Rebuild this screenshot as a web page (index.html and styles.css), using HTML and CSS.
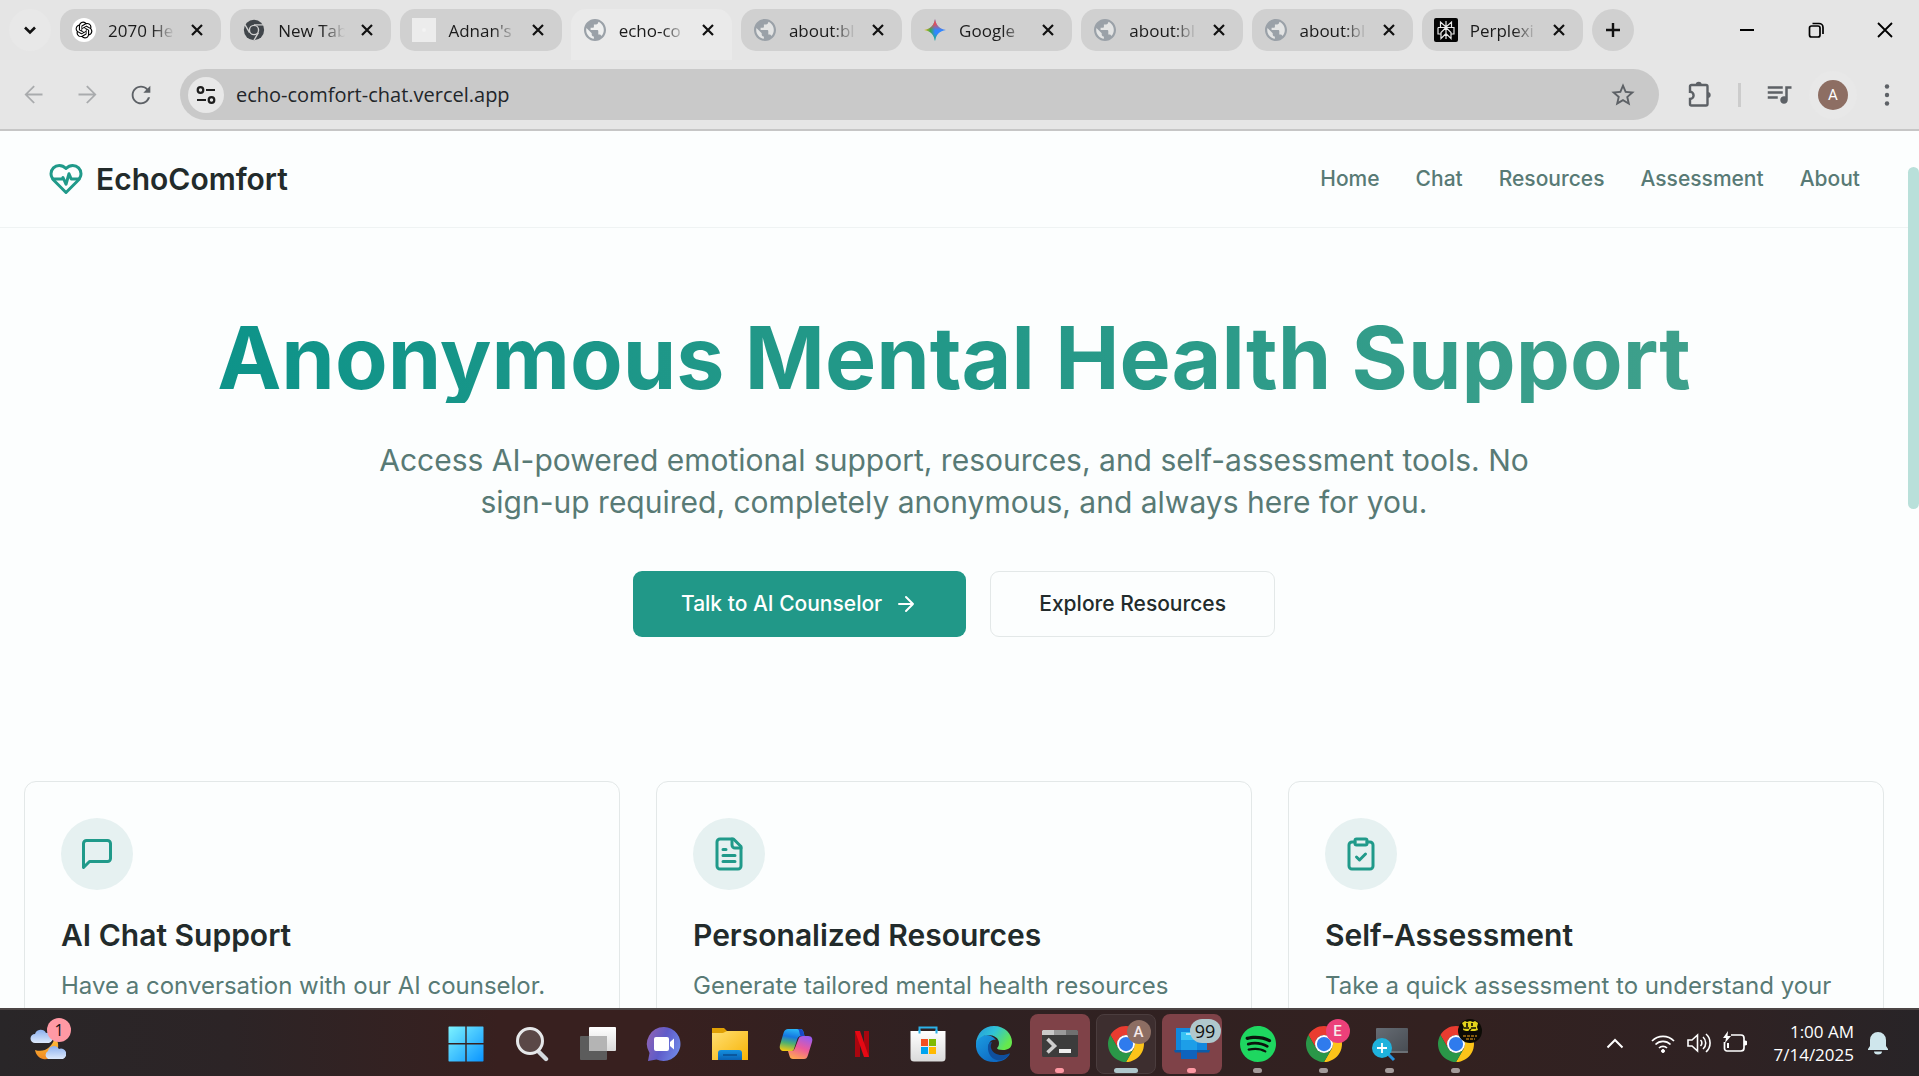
FILE: index.html
```html
<!DOCTYPE html>
<html lang="en">
<head>
<meta charset="utf-8">
<title>EchoComfort</title>
<link rel="stylesheet" href="styles.css">
</head>
<body>
<svg class="defs" aria-hidden="true">
  <defs>
    <linearGradient id="g-win" x1="0" y1="0" x2="1" y2="1"><stop offset="0" stop-color="#7df3ff"/><stop offset="1" stop-color="#0a94ff"/></linearGradient>
    <linearGradient id="g-folder" x1="0" y1="0" x2="1" y2="1"><stop offset="0" stop-color="#ffdf72"/><stop offset="1" stop-color="#f7b305"/></linearGradient>
    <linearGradient id="g-blue" x1="0" y1="0" x2="0" y2="1"><stop offset="0" stop-color="#1490df"/><stop offset="1" stop-color="#0a62b4"/></linearGradient>
    <linearGradient id="g-chat" x1="0" y1="0.2" x2="1" y2="0.6"><stop offset="0" stop-color="#8f63b4"/><stop offset="0.5" stop-color="#5f5bc9"/><stop offset="1" stop-color="#6f87e6"/></linearGradient>
    <linearGradient id="g-cop1" x1="0.5" y1="0" x2="0.3" y2="1"><stop offset="0" stop-color="#29b5f5"/><stop offset="0.35" stop-color="#1577e0"/><stop offset="0.65" stop-color="#4fb070"/><stop offset="1" stop-color="#f2c912"/></linearGradient>
    <linearGradient id="g-cop2" x1="0.7" y1="0" x2="0.3" y2="1"><stop offset="0" stop-color="#9a5cf0"/><stop offset="0.5" stop-color="#ec5a9c"/><stop offset="1" stop-color="#ffa552"/></linearGradient>
    <linearGradient id="g-edge1" x1="0" y1="0" x2="1" y2="0.5"><stop offset="0" stop-color="#2396dc"/><stop offset="0.5" stop-color="#30c3d6"/><stop offset="1" stop-color="#66e84c"/></linearGradient>
    <linearGradient id="g-edge2" x1="0" y1="0" x2="1" y2="1"><stop offset="0" stop-color="#1b9de2"/><stop offset="1" stop-color="#0a59b8"/></linearGradient>
    <linearGradient id="g-moon" x1="0" y1="0" x2="0" y2="1"><stop offset="0" stop-color="#ffc33a"/><stop offset="1" stop-color="#f08a24"/></linearGradient>
    <linearGradient id="g-cloud" x1="0" y1="0" x2="0" y2="1"><stop offset="0" stop-color="#8cb0ee"/><stop offset="1" stop-color="#dde9fb"/></linearGradient>
    <linearGradient id="g-white" x1="0" y1="0" x2="0" y2="1"><stop offset="0" stop-color="#ffffff"/><stop offset="1" stop-color="#dadada"/></linearGradient>
    <linearGradient id="g-gray" x1="0" y1="0" x2="1" y2="1"><stop offset="0" stop-color="#666c74"/><stop offset="1" stop-color="#474c52"/></linearGradient>
    <linearGradient id="g-gem" x1="0" y1="0.5" x2="1" y2="0.5"><stop offset="0" stop-color="#fbbc04"/><stop offset="0.3" stop-color="#34a853"/><stop offset="0.5" stop-color="#3186ff"/><stop offset="1" stop-color="#3186ff"/></linearGradient>
    <linearGradient id="g-gem2" x1="0.5" y1="0" x2="0.5" y2="1"><stop offset="0" stop-color="#ff4641"/><stop offset="0.25" stop-color="#ff4641" stop-opacity="0.8"/><stop offset="0.5" stop-color="#ff4641" stop-opacity="0"/><stop offset="0.65" stop-color="#14bb69" stop-opacity="0"/><stop offset="1" stop-color="#14bb69"/></linearGradient>
    <symbol id="i-x" viewBox="0 0 12 12"><path d="M1 1l10 10M11 1L1 11" fill="none" stroke="currentColor" stroke-width="2.2"/></symbol>
    <symbol id="i-globe" viewBox="2 2 20 20"><path fill="#f0f1f2" d="M12 3a9 9 0 1 0 0 18 9 9 0 0 0 0-18z" opacity=".6"/><path fill="#9aa1a8" d="M12 2C6.48 2 2 6.48 2 12s4.480 10 10 10 10-4.480 10-10S17.520 2 12 2zm-1 17.930c-3.950-.490-7-3.850-7-7.930 0-.620.080-1.210.210-1.790L9 15v1c0 1.100.900 2 2 2v1.930zm6.900-2.540c-.260-.810-1-1.390-1.900-1.390h-1v-3c0-.550-.450-1-1-1H8v-2h2c.550 0 1-.450 1-1V7h2c1.100 0 2-.900 2-2v-.410c2.930 1.190 5 4.060 5 7.410 0 2.080-.800 3.970-2.100 5.390z"/></symbol>
    <symbol id="i-chrome" viewBox="0 0 48 48">
      <path fill="#ea3c30" d="M24 12H44.780A24 24 0 0 0 3.220 12L13.610 30A12 12 0 0 1 24 12Z"/>
      <path fill="#fcc419" d="M34.390 30L24 48A24 24 0 0 0 44.780 12H24A12 12 0 0 1 34.390 30Z"/>
      <path fill="#2a9748" d="M13.610 30L3.220 12A24 24 0 0 0 24 48L34.390 30A12 12 0 0 1 13.610 30Z"/>
      <circle cx="24" cy="24" r="12" fill="#fff"/><circle cx="24" cy="24" r="9.500" fill="#2f7bed"/>
    </symbol>
  </defs>
</svg>

<div class="screen">
  <header class="browser">
    <div class="tabstrip">
      <button class="round" aria-label="Search tabs"><svg width="14" height="14" viewBox="0 0 14 14"><path d="M2 4.500l5 5 5-5" fill="none" stroke="#111" stroke-width="2.600"/></svg></button>
      <div class="tabs">
        <div class="tab">
          <svg class="favicon" viewBox="0 0 24 24"><circle cx="12" cy="12" r="12" fill="#fff"/><path transform="translate(3.600 3.600) scale(.7)" d="M22.2819 9.8211a5.9847 5.9847 0 0 0-.5157-4.9108 6.0462 6.0462 0 0 0-6.5098-2.9A6.0651 6.0651 0 0 0 4.9807 4.1818a5.9847 5.9847 0 0 0-3.9977 2.9 6.0462 6.0462 0 0 0 .7427 7.0966 5.98 5.98 0 0 0 .511 4.9107 6.051 6.051 0 0 0 6.5146 2.9001A5.9847 5.9847 0 0 0 13.2599 24a6.0557 6.0557 0 0 0 5.7718-4.2058 5.9894 5.9894 0 0 0 3.9977-2.9001 6.0557 6.0557 0 0 0-.7475-7.0729zm-9.022 12.6081a4.4755 4.4755 0 0 1-2.8764-1.0408l.1419-.0804 4.7783-2.7582a.7948.7948 0 0 0 .3927-.6813v-6.7369l2.02 1.1686a.071.071 0 0 1 .038.052v5.5826a4.504 4.504 0 0 1-4.4945 4.4944zm-9.6607-4.1254a4.4708 4.4708 0 0 1-.5346-3.0137l.142.0852 4.783 2.7582a.7712.7712 0 0 0 .7806 0l5.8428-3.3685v2.3324a.0804.0804 0 0 1-.0332.0615L9.74 19.9502a4.4992 4.4992 0 0 1-6.1408-1.6464zM2.3408 7.8956a4.485 4.485 0 0 1 2.3655-1.9728V11.6a.7664.7664 0 0 0 .3879.6765l5.8144 3.3543-2.0201 1.1685a.0757.0757 0 0 1-.071 0l-4.8303-2.7865A4.504 4.504 0 0 1 2.3408 7.872zm16.5963 3.8558L13.1038 8.364 15.1192 7.2a.0757.0757 0 0 1 .071 0l4.8303 2.7913a4.4944 4.4944 0 0 1-.6765 8.1042v-5.6772a.79.79 0 0 0-.407-.667zm2.0107-3.0231l-.142-.0852-4.7735-2.7818a.7759.7759 0 0 0-.7854 0L9.409 9.2297V6.8974a.0662.0662 0 0 1 .0284-.0615l4.8303-2.7866a4.4992 4.4992 0 0 1 6.6802 4.66zM8.3065 12.863l-2.02-1.1638a.0804.0804 0 0 1-.038-.0567V6.0742a4.4992 4.4992 0 0 1 7.3757-3.4537l-.142.0805L8.704 5.459a.7948.7948 0 0 0-.3927.6813zm1.0976-2.3654l2.602-1.4998 2.6069 1.4998v2.9994l-2.5974 1.4997-2.6067-1.4997Z"/></svg>
          <span class="tab-title">2070 He</span><button class="close" aria-label="Close tab"><svg width="12" height="12"><use href="#i-x"/></svg></button>
        </div>
        <div class="tab">
          <svg class="favicon" viewBox="-1 -1 26 26"><circle cx="12" cy="12" r="11" fill="#41464b"/><path d="M12 6.500h10M7.200 14.800L2.200 6.200M16.800 14.800l-5 8.600" stroke="#d0d0d0" stroke-width="1.500"/><circle cx="12" cy="12" r="5.700" fill="#d0d0d0"/><circle cx="12" cy="12" r="4.200" fill="#41464b"/></svg>
          <span class="tab-title">New Tab</span><button class="close" aria-label="Close tab"><svg width="12" height="12"><use href="#i-x"/></svg></button>
        </div>
        <div class="tab">
          <svg class="favicon" viewBox="0 0 24 24"><path fill="#ececec" d="M0 0h24v24H0z"/><circle cx="12" cy="12" r="2" fill="#f3f3f3"/></svg>
          <span class="tab-title">Adnan's</span><button class="close" aria-label="Close tab"><svg width="12" height="12"><use href="#i-x"/></svg></button>
        </div>
        <div class="tab active">
          <svg class="favicon globe"><use href="#i-globe"/></svg>
          <span class="tab-title">echo-co</span><button class="close" aria-label="Close tab"><svg width="12" height="12"><use href="#i-x"/></svg></button>
        </div>
        <div class="tab">
          <svg class="favicon globe"><use href="#i-globe"/></svg>
          <span class="tab-title">about:bl</span><button class="close" aria-label="Close tab"><svg width="12" height="12"><use href="#i-x"/></svg></button>
        </div>
        <div class="tab">
          <svg class="favicon" viewBox="0 0 24 24"><path fill="url(#g-gem)" d="M12 1c1 6.500 4.500 10 11 11-6.500 1-10 4.500-11 11-1-6.500-4.500-10-11-11 6.500-1 10-4.500 11-11z"/><path fill="url(#g-gem2)" d="M12 1c1 6.500 4.500 10 11 11-6.500 1-10 4.500-11 11-1-6.500-4.500-10-11-11 6.500-1 10-4.500 11-11z"/></svg>
          <span class="tab-title">Google</span><button class="close" aria-label="Close tab"><svg width="12" height="12"><use href="#i-x"/></svg></button>
        </div>
        <div class="tab">
          <svg class="favicon globe"><use href="#i-globe"/></svg>
          <span class="tab-title">about:bl</span><button class="close" aria-label="Close tab"><svg width="12" height="12"><use href="#i-x"/></svg></button>
        </div>
        <div class="tab">
          <svg class="favicon globe"><use href="#i-globe"/></svg>
          <span class="tab-title">about:bl</span><button class="close" aria-label="Close tab"><svg width="12" height="12"><use href="#i-x"/></svg></button>
        </div>
        <div class="tab">
          <svg class="favicon" viewBox="0 0 24 24"><rect width="24" height="24" rx="2" fill="#050505"/><path d="M12 3v18M12 9L6.500 4v5.500M12 9l5.500-5v5.500M4 9.500h16v6.500h-3M4 9.500v6.500h3M12 9.500l-5 5v6l5-5 5 5v-6z" fill="none" stroke="#e8e8e8" stroke-width="1.200"/></svg>
          <span class="tab-title">Perplexi</span><button class="close" aria-label="Close tab"><svg width="12" height="12"><use href="#i-x"/></svg></button>
        </div>
      </div>
      <button class="round filled" aria-label="New tab"><svg width="16" height="16" viewBox="0 0 16 16"><path d="M8 1v14M1 8h14" stroke="#111" stroke-width="2.400"/></svg></button>
      <div class="window-controls">
        <button aria-label="Minimize"><svg width="16" height="16" viewBox="0 0 16 16"><path d="M1 8h14" stroke="#000" stroke-width="2"/></svg></button>
        <button aria-label="Restore"><svg width="16" height="16" viewBox="0 0 16 16"><g fill="none" stroke="#000" stroke-width="1.700"><rect x="1.500" y="4" width="10.500" height="11" rx="2"/><path d="M4.500 1.500H11a4 4 0 0 1 4 4V12"/></g></svg></button>
        <button aria-label="Close"><svg width="16" height="16" viewBox="0 0 16 16"><path d="M1 1l14 14M15 1L1 15" stroke="#000" stroke-width="1.800"/></svg></button>
      </div>
    </div>
    <div class="toolbar">
      <button class="tool dim" aria-label="Back"><svg width="27" height="27" viewBox="0 0 24 24"><path fill="currentColor" d="M20 11.200H7l6.200-6.200L12 4l-8 8 8 8 1.200-1L7 12.800H20z"/></svg></button>
      <button class="tool dim" aria-label="Forward"><svg width="27" height="27" viewBox="0 0 24 24"><path fill="currentColor" d="M4 11.200h13l-6.200-6.200L12 4l8 8-8 8-1.200-1 6.200-6.200H4z"/></svg></button>
      <button class="tool" aria-label="Reload"><svg width="28" height="28" viewBox="0 0 24 24"><path fill="currentColor" d="M17.650 6.350C16.200 4.900 14.210 4 12 4c-4.420 0-7.990 3.580-7.990 8s3.570 8 7.990 8c3.730 0 6.840-2.550 7.730-6h-1.800c-.820 2.500-3.200 4.400-5.930 4.400-3.500 0-6.400-2.800-6.400-6.400s2.900-6.400 6.400-6.400c1.800 0 3.400.700 4.500 1.900L14 10h6V4l-2.350 2.350z"/></svg></button>
      <div class="omnibox">
        <button class="site-info" aria-label="View site information"><svg width="20" height="20" viewBox="0 0 20 20"><g fill="none" stroke="#1f1f1f" stroke-width="2.200"><circle cx="4.500" cy="5" r="2.800"/><path d="M10 5h9M1 15h9"/><circle cx="15.500" cy="15" r="2.800"/></g></svg></button>
        <input class="url" type="text" aria-label="Address" value="echo-comfort-chat.vercel.app">
        <button class="star" aria-label="Bookmark this tab"><svg width="28" height="28" viewBox="0 0 24 24"><path fill="#5d6166" d="M22 9.240l-7.190-.620L12 2 9.190 8.630 2 9.240l5.460 4.730L5.820 21 12 17.270 18.180 21l-1.630-7.030L22 9.240zM12 15.400l-3.760 2.270 1-4.280-3.320-2.880 4.380-.380L12 6.100l1.710 4.040 4.380.380-3.320 2.880 1 4.280L12 15.400z"/></svg></button>
      </div>
      <button class="tool" aria-label="Extensions"><svg width="28" height="28" viewBox="0 1 28 28"><path d="M4 6.500a1.500 1.500 0 0 1 1.500-1.500H20a1.500 1.500 0 0 1 1.500 1.500V24a1.500 1.500 0 0 1-1.500 1.500H5.500A1.500 1.500 0 0 1 4 24v-5a3.600 3.600 0 0 0 0-7.200z" fill="none" stroke="currentColor" stroke-width="2.400"/><path fill="currentColor" d="M9.700 5a3 3.200 0 0 1 6 0zM21.500 12a3.200 3 0 0 1 0 6z"/></svg></button>
      <span class="divider"></span>
      <button class="tool" aria-label="Media controls"><svg width="30" height="30" viewBox="0 1 24 24"><path fill="currentColor" d="M15 6H3v2h12V6zm0 4H3v2h12v-2zM3 16h8v-2H3v2zM17 6v8.180c-.310-.110-.650-.180-1-.180-1.660 0-3 1.340-3 3s1.340 3 3 3 3-1.340 3-3V8h3V6h-5z"/></svg></button>
      <button class="tool profile" aria-label="Profile"><span class="avatar">A</span></button>
      <button class="tool" aria-label="Menu"><svg width="6" height="24" viewBox="0 0 6 24"><g fill="currentColor"><circle cx="3" cy="3.500" r="2.200"/><circle cx="3" cy="12" r="2.200"/><circle cx="3" cy="20.500" r="2.200"/></g></svg></button>
    </div>
  </header>

  <div class="viewport">
    <div class="page">
      <nav class="site-nav">
        <a class="brand" href="#"><svg class="line-icon" width="36" height="36" viewBox="0 0 24 24"><path d="M19 14c1.490-1.460 3-3.210 3-5.500A5.500 5.500 0 0 0 16.500 3c-1.760 0-3 .500-4.500 2-1.500-1.500-2.740-2-4.500-2A5.500 5.500 0 0 0 2 8.500c0 2.300 1.500 4.050 3 5.500l7 7Z"/><path d="M3.220 12H9.500l.500-1 2 4.500 2-7 1.500 3.500h5.270"/></svg>EchoComfort</a>
        <div class="links"><a href="#">Home</a><a href="#">Chat</a><a href="#">Resources</a><a href="#">Assessment</a><a href="#">About</a></div>
      </nav>
      <main>
        <section class="hero">
          <h1>Anonymous Mental Health Support</h1>
          <p>Access AI-powered emotional support, resources, and self-assessment tools. No sign-up required, completely anonymous, and always here for you.</p>
          <div class="actions">
            <button class="btn primary">Talk to AI Counselor<svg width="24" height="24" viewBox="0 0 24 24" fill="none" stroke="currentColor" stroke-width="2" stroke-linecap="round" stroke-linejoin="round"><path d="M5 12h14M12 5l7 7-7 7"/></svg></button>
            <button class="btn outline">Explore Resources</button>
          </div>
        </section>
        <section class="cards">
          <article class="card">
            <span class="badge-icon"><svg class="line-icon" width="36" height="36" viewBox="0 0 24 24"><path d="M21 15a2 2 0 0 1-2 2H7l-4 4V5a2 2 0 0 1 2-2h14a2 2 0 0 1 2 2z"/></svg></span>
            <h2>AI Chat Support</h2><p>Have a conversation with our AI counselor.</p>
          </article>
          <article class="card">
            <span class="badge-icon"><svg class="line-icon" width="36" height="36" viewBox="0 0 24 24"><path d="M15 2H6a2 2 0 0 0-2 2v16a2 2 0 0 0 2 2h12a2 2 0 0 0 2-2V7Z"/><path d="M14 2v4a2 2 0 0 0 2 2h4M10 9H8M16 13H8M16 17H8"/></svg></span>
            <h2>Personalized Resources</h2><p>Generate tailored mental health resources</p>
          </article>
          <article class="card">
            <span class="badge-icon"><svg class="line-icon" width="36" height="36" viewBox="0 0 24 24"><rect width="8" height="4" x="8" y="2" rx="1"/><path d="M16 4h2a2 2 0 0 1 2 2v14a2 2 0 0 1-2 2H6a2 2 0 0 1-2-2V6a2 2 0 0 1 2-2h2M9 14l2 2 4-4"/></svg></span>
            <h2>Self-Assessment</h2><p>Take a quick assessment to understand your</p>
          </article>
        </section>
      </main>
    </div>
    <div class="scrollbar"><div class="thumb"></div></div>
  </div>

  <footer class="taskbar">
    <button class="weather" aria-label="Weather">
      <svg width="36" height="36" viewBox="0 0 36 36"><path fill="url(#g-moon)" d="M25 11c8 10 0 24-12 22-4-1-7-4-8-9 9 3 17-2 20-13z"/><path fill="url(#g-cloud)" d="M5 17a4.500 4.500 0 0 1 0-9 6 6 0 0 1 11-1 5 5 0 0 1 3 10z"/><path fill="url(#g-cloud)" d="M18 33a4.500 4.500 0 0 1 0-8 6 6 0 0 1 11-2 5 5 0 0 1 4 10z"/></svg>
      <span class="count">1</span>
    </button>
    <div class="apps">
      <button class="app" aria-label="Start"><svg width="36" height="36" viewBox="0 0 36 36"><path fill="url(#g-win)" d="M1 .500h16.300V17H.500V1zM18.700.500H35l.500.500v16H18.700zM.500 18.500h16.800V35.500H1l-.500-.500zM18.700 18.500h16.800V35l-.500.500H18.700z"/></svg></button>
      <button class="app" aria-label="Search"><svg width="36" height="36" viewBox="0 0 36 36"><path d="M25 26l7 7" stroke="#d5d9de" stroke-width="4.400" stroke-linecap="round"/><circle cx="16" cy="15" r="12.500" fill="#5a4847" stroke="#e6e8ea" stroke-width="3"/></svg></button>
      <button class="app" aria-label="Task view"><svg width="36" height="36" viewBox="0 0 36 36"><rect x="9" y="1" width="27" height="24" rx="1" fill="url(#g-white)"/><rect y="10" width="27" height="24" rx="1" fill="#5c5c5c"/><path d="M9 10h18v15H9z" fill="#b4b4b4"/></svg></button>
      <button class="app" aria-label="Chat"><svg width="36" height="36" viewBox="0 0 36 36"><path fill="url(#g-chat)" d="M18 1a17 17 0 1 1-7.500 32.500L2 35l1.500-8A17 17 0 0 1 18 1z"/><rect x="8" y="11" width="15" height="14" rx="2" fill="#fff"/><path fill="#fff" d="M24 16l4-3.500v11L24 20z"/></svg></button>
      <button class="app" aria-label="File Explorer"><svg width="36" height="36" viewBox="0 0 36 36"><path fill="#e0a004" d="M0 2h12l3 3v5H0z"/><path fill="url(#g-folder)" d="M0 7h11l4-2h21v29H0z"/><path fill="url(#g-blue)" d="M6 34v-7a3 3 0 0 1 3-3h18a3 3 0 0 1 3 3v7z"/><path d="M11 29h14" stroke="#0a4c8f" stroke-width="1.500"/></svg></button>
      <button class="app" aria-label="Copilot"><svg width="36" height="36" viewBox="0 0 36 36"><path fill="url(#g-cop1)" d="M10 3h12c2 0 3 1 3.500 3l1 4h-3c-3 0-4 2-4.500 4l-3 9c-.500 1.500-1 2-3 2H6c-3 0-5-2-4-6L5.500 7C6.500 4 8 3 10 3z"/><path fill="#1a49c8" d="M19 3h3c2 0 3 1 3.500 3l1 4h-4c-1.500-4-1-7-3.500-7z"/><path fill="url(#g-cop2)" d="M25 10h5c4 0 5 3 4 6l-4 13c-1 3-2 4-4 4H15c-2 0-3-1-3.500-3L10 25h3c2 0 3-.500 4-3l3.500-9c.500-2 2-3 4.500-3z"/></svg></button>
      <button class="app" aria-label="Netflix"><svg width="36" height="36" viewBox="0 0 36 36"><path fill="#a8060f" d="M11 5h5v26h-5zM20 5h5v26h-5z"/><path fill="#e50914" d="M11 5h5l9 26h-5z"/></svg></button>
      <button class="app" aria-label="Microsoft Store"><svg width="36" height="36" viewBox="0 0 36 36"><path d="M9.500 7V1.500h17V7" fill="none" stroke="#2bb1e8" stroke-width="2"/><path fill="url(#g-white)" d="M.500 5h35v27a3.500 3.500 0 0 1-3.500 3.500H4A3.500 3.500 0 0 1 .500 32z"/><path d="M9.500 7.500V4M26.500 7.500V4" stroke="#2bb1e8" stroke-width="2"/><path fill="#f25022" d="M11 13h7v7h-7z"/><path fill="#7fba00" d="M19 13h7v7h-7z"/><path fill="#00a4ef" d="M11 21h7v7h-7z"/><path fill="#ffb900" d="M19 21h7v7h-7z"/></svg></button>
      <button class="app" aria-label="Edge"><svg width="36" height="36" viewBox="0 0 36 36"><path fill="url(#g-edge2)" d="M0 17C1 8 14 6 20 14c-5-1-8 3-7 8 1 7 8 11 17 8l4-2c-4 6-9 8-16 8C7 36-1 28 0 17z"/><path fill="#0f4f9e" d="M12 20c-1 9 6 16 14 14 4-2 7-4 8-7-8 4-17 2-19-5-.500-2 0-4 1-6-2 0-4 2-4 4z"/><path fill="url(#g-edge1)" d="M0 17C1 7 8 0 18 0c11 0 18 8 18 16 0 6-4 8-9 8-4 0-6-1-6-2 1-1 2-2 2-5 0-5-5-8-11-8-5 0-10 3-12 8z"/></svg></button>
      <button class="app alert" aria-label="Terminal"><svg width="36" height="36" viewBox="0 0 36 36"><rect y="4" width="36" height="27" rx="1.500" fill="#3c3c3c"/><path fill="#c9c9c9" d="M1 4h11v5H0V5z"/><path fill="#9a9a9a" d="M12 4h12v5H12z"/><path fill="#707070" d="M24 4h11l1 1v4H24z"/><path d="M5.500 13l7 7-7 6.500" fill="none" stroke="#cfcfcf" stroke-width="3.600"/><path fill="#eee" d="M17 23h12v4H17z"/></svg><i class="dot"></i></button>
      <button class="app current" aria-label="Chrome, profile A"><svg width="36" height="36"><use href="#i-chrome"/></svg><span class="mini brown">A</span><i class="dot"></i></button>
      <button class="app alert" aria-label="Phone Link"><svg width="36" height="36" viewBox="0 0 36 36"><path fill="#1287dd" d="M2 2h31v23H2z"/><path fill="#0b5ba8" d="M0 24h36l-1 2.500H1z"/><path fill="#38c3f5" d="M7 6h16v17H7z"/><path fill="#1d9ee8" d="M7 14h16v10H7z"/><path fill="#0f63bd" d="M7 24h16v9H7z"/><path d="M12 8h6" stroke="#d2f3ff" stroke-width="1.500"/></svg><span class="pill">99</span><i class="dot"></i></button>
      <button class="app running" aria-label="Spotify"><svg width="36" height="36" viewBox="0 0 24 24"><circle cx="12" cy="12" r="11" fill="#0b140d"/><path fill="#1ed760" d="M12 0C5.400 0 0 5.400 0 12s5.400 12 12 12 12-5.400 12-12S18.660 0 12 0zm5.521 17.340c-.240.359-.660.480-1.021.240-2.820-1.740-6.360-2.101-10.561-1.141-.418.122-.779-.179-.899-.539-.120-.421.180-.780.540-.900 4.560-1.021 8.520-.600 11.640 1.320.420.180.479.659.301 1.020zm1.440-3.300c-.301.420-.841.600-1.262.300-3.239-1.980-8.159-2.580-11.939-1.380-.479.120-1.020-.120-1.140-.600-.120-.480.120-1.021.600-1.141C9.600 9.900 15 10.561 18.720 12.840c.361.181.540.780.241 1.200zm.120-3.360C15.240 8.400 8.820 8.160 5.160 9.301c-.600.179-1.200-.181-1.380-.721-.180-.601.180-1.200.720-1.381 4.260-1.260 11.280-1.020 15.721 1.621.539.300.719 1.020.419 1.560-.299.421-1.020.599-1.559.300z"/></svg><i class="dot"></i></button>
      <button class="app running" aria-label="Chrome, profile E"><svg width="36" height="36"><use href="#i-chrome"/></svg><span class="mini pink">E</span><i class="dot"></i></button>
      <button class="app running" aria-label="Magnifier"><svg width="36" height="36" viewBox="0 0 36 36"><rect x="4" y="2" width="32" height="25" rx="1" fill="url(#g-gray)"/><path d="M5 26h31" stroke="#8d9196"/><path d="M16 28l6 6" stroke="#2492dd" stroke-width="3"/><circle cx="10" cy="22" r="10" fill="#1fb2dc"/><path d="M10 17v10M5 22h10" stroke="#fff" stroke-width="1.800"/></svg><i class="dot"></i></button>
      <button class="app running" aria-label="Chrome, third profile"><svg width="36" height="36"><use href="#i-chrome"/></svg><span class="mini black"><svg width="24" height="24" viewBox="0 0 24 24"><path d="M4 4l3-2 2 1 3-1 3 1 2-1 3 2-1 4 1 3-3 1H8l-3-1 1-3z" fill="#e3d41c"/><path d="M9 4v4M14 4v3M6 9h5M13 9h5M11 12l2-2" stroke="#0c0b05" stroke-width="1.600"/><path d="M5 17h14M8 20h9" stroke="#a87414" stroke-width="1.500" stroke-dasharray="3 1"/></svg></span><i class="dot"></i></button>
    </div>
    <div class="tray">
      <button class="tray-up" aria-label="Hidden icons"><svg width="18" height="12" viewBox="0 0 18 12"><path d="M1.500 10.500L9 3l7.500 7.500" fill="none" stroke="#fff" stroke-width="2"/></svg></button>
      <button class="status" aria-label="Network, volume, battery">
        <svg width="24" height="24" viewBox="0 0 24 24" fill="none" stroke="#fff" stroke-width="1.700"><path d="M1 10a15.500 15.500 0 0 1 22 0M4.500 13.500a10.600 10.600 0 0 1 15 0M8 17a5.700 5.700 0 0 1 8 0"/><circle cx="12" cy="20" r="1.500" fill="#fff" stroke-width="1"/></svg>
        <svg width="24" height="24" viewBox="0 0 24 24" fill="none" stroke="#fff" stroke-width="1.600"><path d="M1 9h4l5.500-5v16L5 15H1zM13.500 9a4 4 0 0 1 0 6M16 6a8 8 0 0 1 0 12M19 3a12 12 0 0 1 0 18"/></svg>
        <svg width="24" height="24" viewBox="0 0 24 24" fill="none" stroke="#fff" stroke-width="1.700"><path d="M8 4h10a3 3 0 0 1 3 3v10a3 3 0 0 1-3 3H4a2.500 2.500 0 0 1-2.500-2.500V11"/><path fill="#fff" stroke="none" d="M21 9.500h1a2 2 0 0 1 0 5h-1zM5 0L0 7h3L2 12l6-7H4.500zM4 12h2v5H4z"/></svg>
      </button>
      <div class="clock"><time>1:00 AM</time><time>7/14/2025</time></div>
      <button class="bell" aria-label="Notifications"><svg width="20" height="24" viewBox="0 0 20 24"><path fill="#cfe6ec" d="M10 1a8 8 0 0 1 8 8v6l2 3v1H0v-1l2-3V9a8 8 0 0 1 8-8zM6 20.500h8a4 3 0 0 1-8 0z"/></svg></button>
    </div>
  </footer>
</div>
</body>
</html>
```
FILE: styles.css
```css
* { box-sizing: border-box; }
body { margin: 0; font-family: Inter, sans-serif; background: #fcfefe; }
button { border: 0; padding: 0; background: none; font: inherit; color: inherit; display: flex; align-items: center; justify-content: center; }
a { color: inherit; text-decoration: none; }
h1, h2, p { margin: 0; }
svg { flex: none; display: block; }
.defs { position: absolute; width: 0; height: 0; }

.screen { height: 100vh; display: flex; flex-direction: column; }

/* Browser chrome */
.browser { flex: none; background: #e6e6e6; border-bottom: 2px solid #c6c6c6; font-family: "Open Sans", "Noto Sans", sans-serif; }
.tabstrip { height: 60px; padding-left: 9px; display: flex; align-items: center; gap: 9px; background: #e5e5e5; }
.round { width: 42px; height: 42px; flex: none; border-radius: 21px; background: #e8e8e8; }
.round.filled { background: #d0d0d0; }
.tabs { flex: 1 1 0; max-width: 1523px; display: flex; gap: 9px; min-width: 0; }
.tab { flex: 1 1 0; min-width: 0; height: 42px; padding: 0 18px 0 12px; display: flex; align-items: center; border-radius: 15px; background: #d0d0d0; }
.tab.active { height: 51px; margin-bottom: -9px; padding-bottom: 9px; background: #eaeaea; border-radius: 15px 15px 0 0; }
.favicon { width: 24px; height: 24px; }
.favicon.globe { padding: 1px; }
.tab-title { flex: 1 1 0; min-width: 0; margin: 2px 16px 0 12px; overflow: hidden; white-space: nowrap; font-size: 17px; line-height: 24px; color: #1b1b1b; -webkit-mask-image: linear-gradient(90deg, #000 65%, transparent); mask-image: linear-gradient(90deg, #000 65%, transparent); }
.close { width: 12px; flex: none; color: #111; }
.window-controls { margin-left: auto; display: flex; align-self: stretch; }
.window-controls button { width: 69px; }

.toolbar { height: 69px; padding: 0 8px 0 9px; display: flex; align-items: center; gap: 6px; background: #e6e6e6; }
.tool { width: 48px; height: 48px; flex: none; border-radius: 24px; color: #5d6166; }
.tool.dim { color: #a9abad; }
.omnibox { flex: 1; margin: 0 11px 0 9px; height: 51px; padding: 0 22px 0 8px; display: flex; align-items: center; gap: 12px; border-radius: 26px; background: #c9c9c9; }
.site-info { width: 36px; height: 36px; flex: none; border-radius: 18px; background: #e8e8e8; }
.url { flex: 1; min-width: 0; border: 0; padding: 0; background: none; font: 20px/28px "Open Sans", "Noto Sans", sans-serif; color: #22262a; }
.divider { width: 3px; height: 24px; margin: 0 8px; background: #cccccc; }
.profile { background: #e8e8e8; }
.avatar { width: 30px; height: 30px; border-radius: 15px; background: #8d6e63; color: #fff; font: 15px/30px Roboto, sans-serif; }

/* Web page */
.viewport { flex: 1 1 0; min-height: 0; display: flex; overflow: hidden; }
.page { flex: 1; min-width: 0; color: #222b2b; }
.scrollbar { width: 11px; padding-top: 36px; }
.thumb { height: 342px; border-radius: 6px; background: #b9e0da; }
.site-nav { height: 97px; padding: 0 48px; display: flex; align-items: center; justify-content: space-between; border-bottom: 1px solid #eff3f3; }
.brand { display: flex; align-items: center; gap: 12px; font-size: 30px; line-height: 42px; font-weight: 600; }
.line-icon { fill: none; stroke: #209a8a; stroke-width: 2; stroke-linecap: round; stroke-linejoin: round; }
.links { display: flex; gap: 36px; font-size: 21px; line-height: 30px; font-weight: 500; color: #587a75; }

.hero { padding: 85px 24px 144px; display: flex; flex-direction: column; align-items: center; text-align: center; }
.hero h1 { align-self: stretch; font-size: 86px; line-height: 90px; font-weight: 700; color: transparent; background: linear-gradient(90deg, #06928a, #229888 40%, #229888 50%, #46a28c); -webkit-background-clip: text; background-clip: text; }
.hero p { max-width: 1152px; margin-top: 36px; font-size: 30px; line-height: 42px; color: #587a75; }
.actions { margin-top: 48px; display: flex; gap: 24px; }
.btn { height: 66px; padding: 0 48px; gap: 12px; border-radius: 9px; font-size: 21px; line-height: 30px; font-weight: 500; }
.btn.primary { background: #219888; color: #fff; }
.btn.outline { border: 1px solid #e3e8e8; color: #222b2b; }

.cards { padding: 0 24px; display: grid; grid-template-columns: repeat(3, minmax(0, 1fr)); gap: 36px; }
.card { padding: 36px; border: 1px solid #e3e8e8; border-radius: 12px; }
.badge-icon { width: 72px; height: 72px; border-radius: 36px; display: flex; align-items: center; justify-content: center; background: #e6f1f1; }
.card h2 { margin-top: 24px; font-size: 30px; line-height: 42px; font-weight: 600; }
.card p { margin-top: 12px; font-size: 24px; line-height: 36px; color: #587a75; }

/* Taskbar */
.taskbar { flex: none; height: 68px; padding: 4px 0 0 2px; display: grid; grid-template-columns: 1fr auto 1fr; border-top: 2px solid #4c4545; background: linear-gradient(90deg, #292628 0%, #2c2426 12%, #38201f 26%, #38201f 34%, #2f2122 50%, #332120 75%, #2f2223 90%, #282427 100%); font-family: "Open Sans", "Noto Sans", sans-serif; color: #fff; }
.weather { position: relative; width: 36px; height: 60px; margin-left: 28px; }
.count { position: absolute; top: 4px; right: -5px; width: 24px; height: 24px; border-radius: 12px; background: #ff99a4; color: #111; font-size: 16px; line-height: 24px; }
.apps { display: flex; gap: 6px; }
.app { position: relative; width: 60px; height: 60px; border-radius: 8px; }
.app.alert { background: #7f4248; }
.app.current { background: #3d2e2f; border: 1px solid #4b3d3e; }
.dot { position: absolute; left: 50%; bottom: 1px; width: 9px; height: 5px; margin-left: -5px; border-radius: 3px; background: #a49b9b; }
.alert .dot { background: #ff99a4; }
.current .dot { width: 24px; margin-left: -12px; bottom: 0; background: #b0c8cd; }
.mini { position: absolute; top: 5px; right: 4px; width: 24px; height: 24px; border-radius: 12px; font: 500 15px/24px Roboto, sans-serif; color: #f5e9e9; }
.brown { background: #8d6e63; }
.pink { background: #ec407a; }
.black { background: #0c0b05; }
.pill { position: absolute; top: 5px; right: 1px; width: 31px; height: 24px; border-radius: 12px; background: #b0c8cd; color: #111; font-size: 18px; line-height: 24px; }
.tray { display: flex; align-items: center; justify-content: flex-end; padding: 0 31px 4px 0; }
.tray-up { width: 18px; margin-right: 27px; }
.status { gap: 12px; }
.clock { width: 107px; display: flex; flex-direction: column; text-align: right; font-size: 17px; line-height: 23px; }
.bell { margin-left: 14px; }
```
